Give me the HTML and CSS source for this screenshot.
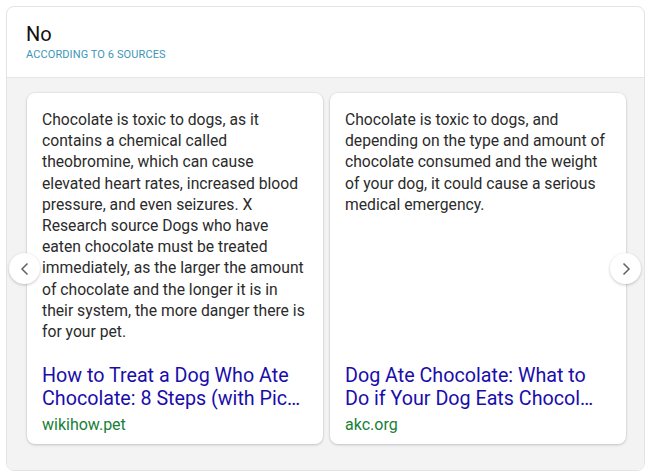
FILE: index.html
```html
<!DOCTYPE html>
<html>
<head>
<meta charset="utf-8">
<link rel="stylesheet" href="styles.css">
</head>
<body>
<div class="panel">
  <div class="head">
    <div class="answer">No</div>
    <div class="sources">ACCORDING TO 6 SOURCES</div>
  </div>
  <div class="strip">
    <div class="cards">
      <div class="card">
        <p class="snippet">Chocolate is toxic to dogs, as it contains a chemical called theobromine, which can cause elevated heart rates, increased blood pressure, and even seizures. X Research source Dogs who have eaten chocolate must be treated immediately, as the larger the amount of chocolate and the longer it is in their system, the more danger there is for your pet.</p>
        <div class="foot">
          <a class="title"><span class="tline">How to Treat a Dog Who Ate</span><span class="tline">Chocolate: 8 Steps (with Pic…</span></a>
          <div class="domain">wikihow.pet</div>
        </div>
      </div>
      <div class="card">
        <p class="snippet">Chocolate is toxic to dogs, and depending on the type and amount of chocolate consumed and the weight of your dog, it could cause a serious medical emergency.</p>
        <div class="foot">
          <a class="title"><span class="tline">Dog Ate Chocolate: What to</span><span class="tline">Do if Your Dog Eats Chocol…</span></a>
          <div class="domain">akc.org</div>
        </div>
      </div>
    </div>
    <div class="nav prev">
      <svg width="16" height="16" viewBox="0 0 16 16"><path d="M10.5 2.5 L5 8 L10.5 13.5" fill="none" stroke="#5f6368" stroke-width="1.5"/></svg>
    </div>
    <div class="nav next">
      <svg width="16" height="16" viewBox="0 0 16 16"><path d="M5.5 2.5 L11 8 L5.5 13.5" fill="none" stroke="#5f6368" stroke-width="1.5"/></svg>
    </div>
  </div>
</div>
</body>
</html>
```

FILE: styles.css
```css
html, body {
  margin: 0;
  padding: 0;
  background: #ffffff;
}
body {
  padding: 6px;
  font-family: Roboto, "Liberation Sans", Arial, sans-serif;
}
.panel {
  width: 637px;
  border: 1px solid #e3e3e3;
  border-radius: 8px;
  overflow: hidden;
  background: #ffffff;
}
.head {
  padding: 15px 19px 16px;
  height: 39px;
  border-bottom: 1px solid #e6e6e6;
}
.answer {
  font-size: 20px;
  line-height: 24px;
  color: #111111;
}
.sources {
  margin-top: 2px;
  font-size: 11px;
  line-height: 13px;
  color: #3d95b8;
  letter-spacing: 0.1px;
}
.strip {
  position: relative;
  background: #f3f3f3;
  padding: 15px 0 26px 20px;
}
.cards {
  display: flex;
  gap: 7px;
}
.card {
  width: 296px;
  height: 351px;
  box-sizing: border-box;
  background: #ffffff;
  border-radius: 8px;
  box-shadow: 0 1px 3px rgba(0, 0, 0, 0.18), 0 0 0 1px rgba(0, 0, 0, 0.03);
  padding: 16px 14px 9px 15px;
  display: flex;
  flex-direction: column;
}
.snippet {
  margin: 0;
  font-size: 15.7px;
  line-height: 21.2px;
  color: #2b2b2b;
  flex: 1;
}
.foot {
  display: flex;
  flex-direction: column;
}
.title {
  font-size: 19.7px;
  line-height: 23px;
  color: #1a0dab;
  text-decoration: none;
}
.tline {
  display: block;
  white-space: nowrap;
}
.domain {
  margin-top: 5px;
  font-size: 16px;
  line-height: 20px;
  color: #188038;
}
.nav {
  position: absolute;
  top: 175px;
  width: 31px;
  height: 31px;
  border-radius: 50%;
  background: #ffffff;
  box-shadow: 0 1px 3px rgba(0, 0, 0, 0.22);
  display: flex;
  align-items: center;
  justify-content: center;
}
.prev {
  left: 2px;
}
.next {
  left: 603px;
}
```
